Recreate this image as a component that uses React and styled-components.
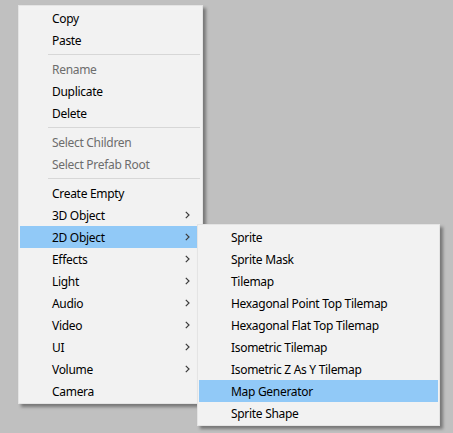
import React from 'react';
import styled, { createGlobalStyle } from 'styled-components';

const GlobalStyle = createGlobalStyle`
    html, body {
        margin: 0;
        padding: 0;
        background: #c0c0c0;
    }
    body {
        font-family: "Segoe UI", "Noto Sans", "Liberation Sans", sans-serif;
    }
`;

const mainItems = [
    { label: 'Copy' },
    { label: 'Paste' },
    { sep: true },
    { label: 'Rename', disabled: true },
    { label: 'Duplicate' },
    { label: 'Delete' },
    { sep: true },
    { label: 'Select Children', disabled: true },
    { label: 'Select Prefab Root', disabled: true },
    { sep: true },
    { label: 'Create Empty' },
    { label: '3D Object', sub: true },
    { label: '2D Object', sub: true, active: true },
    { label: 'Effects', sub: true },
    { label: 'Light', sub: true },
    { label: 'Audio', sub: true },
    { label: 'Video', sub: true },
    { label: 'UI', sub: true },
    { label: 'Volume', sub: true },
    { label: 'Camera' },
];

const subItems = [
    { label: 'Sprite' },
    { label: 'Sprite Mask' },
    { label: 'Tilemap' },
    { label: 'Hexagonal Point Top Tilemap' },
    { label: 'Hexagonal Flat Top Tilemap' },
    { label: 'Isometric Tilemap' },
    { label: 'Isometric Z As Y Tilemap' },
    { label: 'Map Generator', active: true },
    { label: 'Sprite Shape' },
];

const Chevron = () => (
    <svg width="5" height="8" viewBox="0 0 5 8">
        <path d="M0.8 0.8 L4 4 L0.8 7.2" fill="none" stroke="#3c3c3c" strokeWidth="1.2" />
    </svg>
);

const MenuList = ({ items }) => (
    <>
        {items.map((it, i) =>
            it.sep ? (
                <Separator key={i} />
            ) : (
                <Item key={i} $active={it.active} $disabled={it.disabled}>
                    <span>{it.label}</span>
                    {it.sub && <Chevron />}
                </Item>
            )
        )}
    </>
);

const App = () => {
    return (
        <Canvas>
            <GlobalStyle />
            <Menu $left={18} $top={5} $width={185}>
                <MenuList items={mainItems} />
            </Menu>
            <Menu $left={197} $top={224} $width={243}>
                <MenuList items={subItems} />
            </Menu>
        </Canvas>
    );
};

export default App;

const Canvas = styled.div`
    position: relative;
    width: 453px;
    height: 433px;
    background: #c0c0c0;
    overflow: hidden;
`;

const Menu = styled.div`
    position: absolute;
    left: ${p => p.$left}px;
    top: ${p => p.$top}px;
    width: ${p => p.$width}px;
    box-sizing: border-box;
    padding: 1px;
    background: #f2f2f2;
    border: 1px solid #e4e4e4;
    box-shadow: 3px 3px 3px rgba(0, 0, 0, 0.38);
    display: flex;
    flex-direction: column;
`;

const Item = styled.div`
    height: 22px;
    display: flex;
    align-items: center;
    justify-content: space-between;
    padding: 0 11px 0 32px;
    font-size: 12px;
    letter-spacing: -0.3px;
    color: ${p => (p.$disabled ? '#6d6d6d' : '#000')};
    background: ${p => (p.$active ? '#91c9f7' : 'transparent')};
    white-space: nowrap;
`;

const Separator = styled.div`
    height: 1px;
    margin: 3px 1px 3px 28px;
    background: #d7d7d7;
`;
